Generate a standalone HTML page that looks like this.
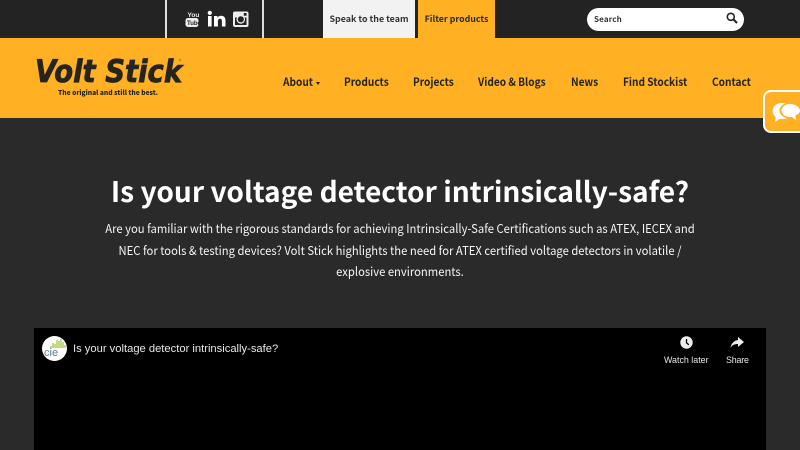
<!DOCTYPE html>
<html lang="en"><head><meta charset="utf-8"><title>Volt Stick</title>
<style>
html,body{margin:0;padding:0}
body{width:800px;height:450px;overflow:hidden;background:#2a2a2a;position:relative;font-family:"Noto Sans CJK JP","Liberation Sans",sans-serif}
.a{position:absolute;white-space:nowrap}
.nav{top:74px;font-size:11px;font-weight:700;color:#26241f;line-height:16px;transform-origin:left;transform:scaleX(.92)}
p{margin:0}
</style></head><body>
<div class="a" style="left:0;top:0;width:800px;height:38px;background:#232323"></div>
<div class="a" style="left:165px;top:0;width:2px;height:38px;background:#ddd"></div>
<div class="a" style="left:262px;top:0;width:2px;height:38px;background:#ddd"></div>
<svg class="a" style="left:184px;top:10px" width="72" height="18" viewBox="0 0 72 18">
<text x="3.500" y="7" font-family="Liberation Sans" font-size="6.500" font-weight="700" fill="#eee">You</text>
<rect x="1.500" y="8" width="13" height="9" rx="2.500" fill="#eee"/>
<text x="3" y="15" font-family="Liberation Sans" font-size="6" font-weight="700" fill="#232323">Tube</text>
<g transform="translate(-1 0)"><rect x="25" y="6" width="3.600" height="10.500" fill="#fff"/><circle cx="26.800" cy="2.900" r="2.100" fill="#fff"/>
<path d="M31 6h3.400v1.600c.8-1.200 2-1.900 3.700-1.900 3 0 4.400 1.900 4.400 5v5.800h-3.600v-5.200c0-1.600-.6-2.500-1.900-2.500-1.400 0-2.100 1-2.100 2.600v5.100H31z" fill="#fff"/></g>
<path fill-rule="evenodd" d="M51 1.500h11.500a2 2 0 0 1 2 2V15a2 2 0 0 1-2 2H51a2 2 0 0 1-2-2V3.500a2 2 0 0 1 2-2zM51 7.500V15h11.500V7.500h-1.900a4.300 4.300 0 1 1-7.700 0zM56.800 6.200a3.100 3.100 0 1 0 0 6.200 3.100 3.100 0 0 0 0-6.200zM59.800 3v2.800h2.800V3z" fill="#eee"/>
</svg>
<div class="a" style="left:323px;top:0;width:92px;height:38px;background:#f2f2f2;color:#333;font-size:8.900px;font-weight:700;line-height:38px;text-align:center">Speak to the team</div>
<div class="a" style="left:418px;top:0;width:77px;height:38px;background:#ffb023;color:#2b2b2b;font-size:8.800px;font-weight:700;line-height:38px;text-align:center">Filter products</div>
<div class="a" style="left:587px;top:8px;width:157px;height:23px;background:#fff;border-radius:12px"></div>
<div class="a" style="left:594px;top:12px;font-size:8px;font-weight:700;color:#333;line-height:15px;letter-spacing:.15px">Search</div>
<svg class="a" style="left:726px;top:12px" width="12" height="12" viewBox="0 0 12 12"><circle cx="4.800" cy="4.800" r="3.500" fill="none" stroke="#222" stroke-width="1.600"/><path d="M7.500 7.500L11 11" stroke="#222" stroke-width="2"/></svg>

<div class="a" style="left:0;top:38px;width:800px;height:80px;background:#ffb023"></div>
<div class="a" style="left:35px;top:50px;font-family:'DejaVu Sans',sans-serif;font-weight:700;font-style:italic;font-size:31px;line-height:44px;color:#26241f;-webkit-text-stroke:.8px #26241f;transform-origin:left;transform:scaleX(.886)">Volt Stick</div>
<div class="a" style="left:179px;top:59px;font-size:5px;line-height:6px;color:#7a5a10">®</div>
<div class="a" style="left:58px;top:87px;font-size:6.650px;font-weight:900;line-height:11px;color:#26241f">The original and still the best.</div>

<div class="a nav" style="left:283px">About</div>
<div class="a" style="left:316px;top:82px;width:0;height:0;border-left:2.500px solid transparent;border-right:2.500px solid transparent;border-top:3px solid #26241f"></div>
<div class="a nav" style="left:344px">Products</div>
<div class="a nav" style="left:413px">Projects</div>
<div class="a nav" style="left:478px">Video &amp; Blogs</div>
<div class="a nav" style="left:571px">News</div>
<div class="a nav" style="left:623px">Find Stockist</div>
<div class="a nav" style="left:712px">Contact</div>

<div class="a" style="left:763px;top:90px;width:50px;height:39px;background:#ffb023;border:2px solid #fff;border-radius:8px;box-sizing:content-box"></div>
<svg class="a" style="left:771px;top:102px" width="29" height="22" viewBox="0 0 29 22">
<path d="M11 1C5.500 1 1.500 4.500 1.500 9c0 2.500 1.200 4.600 3.200 6L4 20l5-3.300c1 .2 2 .3 3 .3 5 0 9-3.500 9-8s-4.500-8-10-8z" fill="#fff"/>
<ellipse cx="18.500" cy="8.500" rx="10" ry="7.800" fill="#ffb023"/>
<path d="M19 2c-4.700 0-8.500 2.900-8.500 6.500S14.300 15 19 15c.6 0 1.200 0 1.800-.1L25 18l-.7-4.500c2.800-1.100 4.700-2.900 4.700-5C29 4.900 23.700 2 19 2z" fill="#fff"/>
</svg>

<div class="a" style="left:0;top:170px;width:800px;text-align:center;font-size:28.100px;font-weight:700;line-height:42px;color:#fff">Is your voltage detector intrinsically-safe?</div>
<div class="a" style="left:0;top:218px;width:800px;text-align:center;font-size:12.200px;line-height:21.700px;color:#f4f4f4;transform-origin:center;transform:scaleX(.923)">
<p>Are you familiar with the rigorous standards for achieving Intrinsically-Safe Certifications such as ATEX, IECEX and</p>
<p>NEC for tools &amp; testing devices? Volt Stick highlights the need for ATEX certified voltage detectors in volatile /</p>
<p>explosive environments.</p></div>

<div class="a" style="left:34px;top:328px;width:732px;height:122px;background:#000"></div>
<div class="a" style="left:42px;top:336px;width:25px;height:25px;background:#fff;border-radius:50%"></div>
<svg class="a" style="left:42px;top:336px" width="25" height="25" viewBox="0 0 25 25"><path d="M9 12v-2M11 12V7M13 12V8M15 12V4M17 12V5M19 12V3M21 12V6M23 12V9" stroke="#a4c639" stroke-width="1.300"/>
<text x="2" y="20" font-family="Liberation Sans" font-size="11" fill="#5a7d8c">cie</text></svg>
<div class="a" style="left:73px;top:341px;font-family:'Liberation Sans',sans-serif;font-size:11.200px;line-height:17px;color:#e6e6e6">Is your voltage detector intrinsically-safe?</div>
<svg class="a" style="left:680px;top:336px" width="13" height="13" viewBox="0 0 13 13"><circle cx="6.500" cy="6.500" r="6.200" fill="#eee"/><path d="M6.500 3v3.800l2.300 2" fill="none" stroke="#000" stroke-width="1.300"/></svg>
<svg class="a" style="left:730px;top:337px" width="14" height="12" viewBox="0 0 14 12"><path d="M8 0l6 5-6 5V7C4.500 7 2 8 .5 11 1 7 3.500 3.500 8 3z" fill="#eee"/></svg>
<div class="a" style="left:664px;top:353px;font-family:'Liberation Sans',sans-serif;font-size:8.900px;line-height:14px;color:#e6e6e6">Watch later</div>
<div class="a" style="left:726px;top:353px;font-family:'Liberation Sans',sans-serif;font-size:8.900px;line-height:14px;letter-spacing:-.2px;color:#e6e6e6">Share</div>
</body></html>
